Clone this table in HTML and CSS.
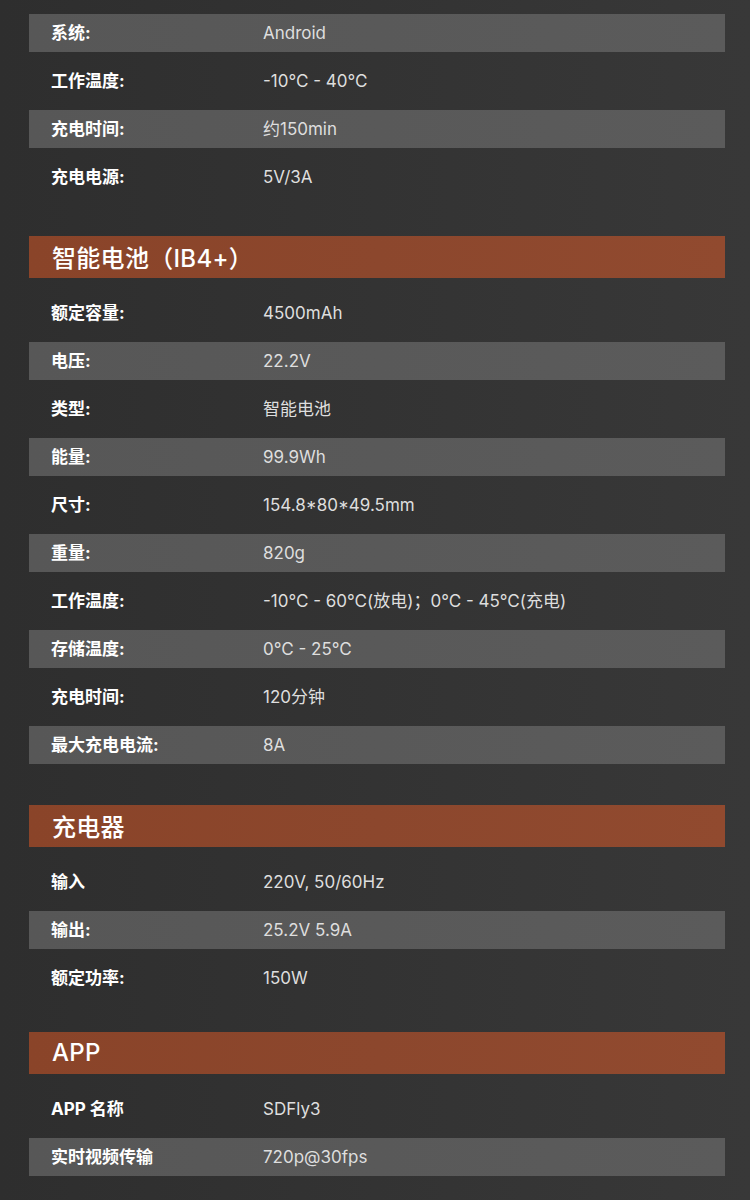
FILE: index.html
```html
<!DOCTYPE html>
<html lang="zh-CN">
<head>
<meta charset="utf-8">
<title>规格参数</title>
<link rel="stylesheet" href="styles.css">
</head>
<body>
<main class="specs">
  <section class="section section--first">
    <div class="row row--alt"><span class="label">系统:</span><span class="value">Android</span></div>
    <div class="row"><span class="label">工作温度:</span><span class="value">-10℃ - 40℃</span></div>
    <div class="row row--alt"><span class="label">充电时间:</span><span class="value">约150min</span></div>
    <div class="row"><span class="label">充电电源:</span><span class="value">5V/3A</span></div>
  </section>

  <section class="section section--battery">
    <h2 class="section-title">智能电池（IB4+）</h2>
    <div class="row"><span class="label">额定容量:</span><span class="value">4500mAh</span></div>
    <div class="row row--alt"><span class="label">电压:</span><span class="value">22.2V</span></div>
    <div class="row"><span class="label">类型:</span><span class="value">智能电池</span></div>
    <div class="row row--alt"><span class="label">能量:</span><span class="value">99.9Wh</span></div>
    <div class="row"><span class="label">尺寸:</span><span class="value">154.8*80*49.5mm</span></div>
    <div class="row row--alt"><span class="label">重量:</span><span class="value">820g</span></div>
    <div class="row"><span class="label">工作温度:</span><span class="value">-10℃ - 60℃(放电)；0℃ - 45℃(充电)</span></div>
    <div class="row row--alt"><span class="label">存储温度:</span><span class="value">0℃ - 25℃</span></div>
    <div class="row"><span class="label">充电时间:</span><span class="value">120分钟</span></div>
    <div class="row row--alt"><span class="label">最大充电电流:</span><span class="value">8A</span></div>
  </section>

  <section class="section section--charger">
    <h2 class="section-title">充电器</h2>
    <div class="row"><span class="label">输入</span><span class="value">220V, 50/60Hz</span></div>
    <div class="row row--alt"><span class="label">输出:</span><span class="value">25.2V 5.9A</span></div>
    <div class="row"><span class="label">额定功率:</span><span class="value">150W</span></div>
  </section>

  <section class="section section--app">
    <h2 class="section-title">APP</h2>
    <div class="row"><span class="label">APP 名称</span><span class="value">SDFly3</span></div>
    <div class="row row--alt"><span class="label">实时视频传输</span><span class="value">720p@30fps</span></div>
  </section>
</main>
</body>
</html>
```

FILE: styles.css
```css
html, body {
  margin: 0;
  padding: 0;
}

body {
  min-height: 1200px;
  background: linear-gradient(to right, #2e2e2e 0%, #333333 50%, #383838 100%);
  font-family: "Noto Sans CJK SC", "Noto Sans", sans-serif;
  color: #ffffff;
}

.specs {
  display: flex;
  flex-direction: column;
  padding: 14px 25px 0 29px;
}

.section {
  display: flex;
  flex-direction: column;
  gap: 10px;
}

.section--battery {
  margin-top: 40px;
}

.section--charger {
  margin-top: 41px;
}

.section--app {
  margin-top: 35px;
}

.section-title {
  margin: 0 0 6px 0;
  height: 42px;
  box-sizing: border-box;
  padding: 0 0 2px 23px;
  display: flex;
  align-items: center;
  background: linear-gradient(to right, #8a4429 0%, #8c472d 50%, #914a2f 100%);
  font-family: "Inter", "Noto Sans CJK SC", sans-serif;
  font-size: 24px;
  font-weight: 500;
  color: #ffffff;
  letter-spacing: 0.3px;
}

.row {
  height: 38px;
  box-sizing: border-box;
  padding: 1px 0 0 22px;
  display: flex;
  align-items: center;
  font-size: 17px;
  line-height: 1;
}

.row--alt {
  background: linear-gradient(to right, #575757 0%, #595959 50%, #5b5b5b 100%);
}

.label {
  width: 212px;
  flex: none;
  font-family: "Inter", "Noto Sans CJK SC", sans-serif;
  font-weight: 700;
  color: #ffffff;
}

.value {
  font-family: "Inter", "Noto Sans CJK SC", sans-serif;
  font-weight: 400;
  color: #dedede;
}
```
